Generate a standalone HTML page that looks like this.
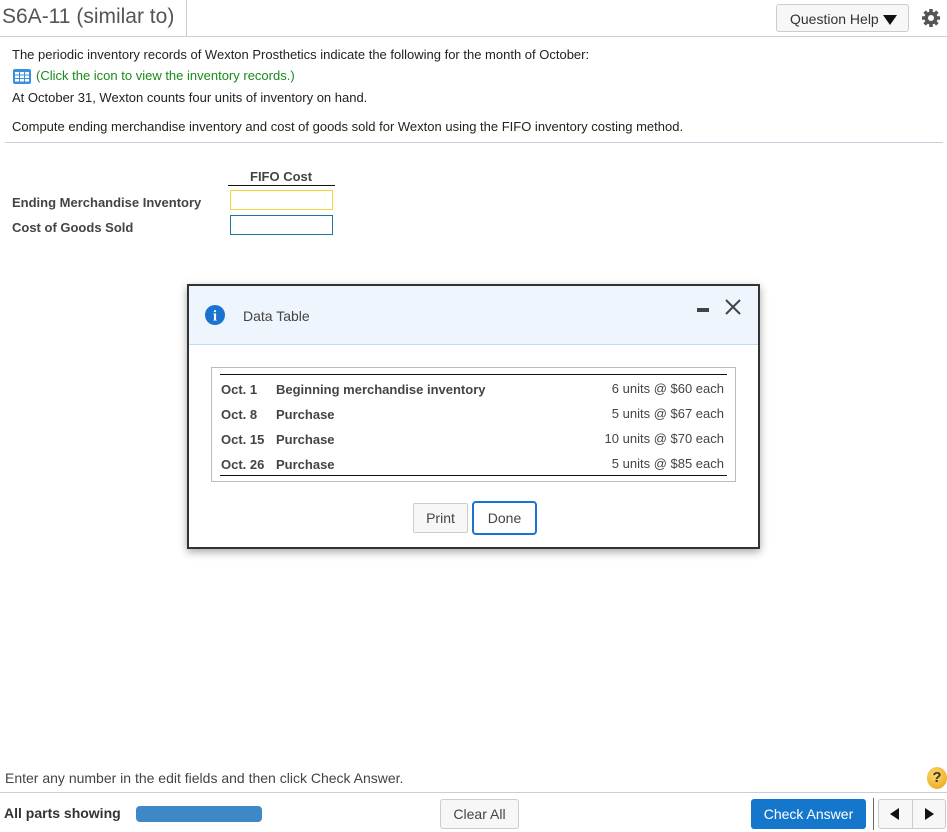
<!DOCTYPE html>
<html><head><style>
*{margin:0;padding:0;box-sizing:border-box}
body{width:947px;height:832px;position:relative;background:#fff;font-family:"Liberation Sans",Arial,sans-serif;color:#222;overflow:hidden}
.a{position:absolute;white-space:nowrap}
.t{font-size:13px}
.b{font-weight:bold;color:#444;font-size:13px}
</style></head><body>
<div class="a" style="left:2px;top:5px;font-size:21px;color:#555">S6A-11 (similar to)</div>
<div class="a" style="left:186px;top:0;width:1px;height:36px;background:#ccc"></div>
<div class="a" style="left:0;top:36px;width:947px;height:1px;background:#ccd"></div>
<div class="a" style="left:776px;top:4px;width:133px;height:28px;border:1px solid #ccc;border-radius:3px;background:#f7f7f7;font-size:14px;color:#333;padding:6px 0 0 13px">Question Help <span style="display:inline-block;width:0;height:0;border-left:7px solid transparent;border-right:7px solid transparent;border-top:10px solid #111;vertical-align:-1px"></span></div>
<svg class="a" style="left:921px;top:8px" width="20" height="20" viewBox="0 0 20 20"><g fill="#555"><circle cx="10" cy="10" r="6.5"/><g stroke="#555" stroke-width="3.5"><line x1="10" y1="1" x2="10" y2="19"/><line x1="1" y1="10" x2="19" y2="10"/><line x1="3.6" y1="3.6" x2="16.4" y2="16.4"/><line x1="16.4" y1="3.6" x2="3.6" y2="16.4"/></g></g><circle cx="10" cy="10" r="3" fill="#fff"/></svg>
<div class="a t" style="left:12px;top:47px">The periodic inventory records of Wexton Prosthetics indicate the following for the month of October:</div>
<svg class="a" style="left:13px;top:69px" width="18" height="15"><rect width="18" height="15" rx="2" fill="#3b8fe0"/><g fill="#fff"><rect x="2" y="3" width="4" height="2.5"/><rect x="7" y="3" width="4" height="2.5"/><rect x="12" y="3" width="4" height="2.5"/><rect x="2" y="6.5" width="4" height="2.5"/><rect x="7" y="6.5" width="4" height="2.5"/><rect x="12" y="6.5" width="4" height="2.5"/><rect x="2" y="10" width="4" height="2.5"/><rect x="7" y="10" width="4" height="2.5"/><rect x="12" y="10" width="4" height="2.5"/></g></svg>
<div class="a t" style="left:36px;top:68px;color:#1a8a1a">(Click the icon to view the inventory records.)</div>
<div class="a t" style="left:12px;top:90px">At October 31, Wexton counts four units of inventory on hand.</div>
<div class="a t" style="left:12px;top:119px">Compute ending merchandise inventory and cost of goods sold for Wexton using the FIFO inventory costing method.</div>
<div class="a" style="left:5px;top:142px;width:938px;height:1px;background:#ccd"></div>
<div class="a b" style="left:250px;top:169px">FIFO Cost</div>
<div class="a" style="left:228px;top:185px;width:107px;height:1px;background:#111"></div>
<div class="a b" style="left:12px;top:195px">Ending Merchandise Inventory</div>
<div class="a b" style="left:12px;top:220px">Cost of Goods Sold</div>
<div class="a" style="left:230px;top:190px;width:103px;height:20px;border:1px solid #f5d33a"></div>
<div class="a" style="left:230px;top:215px;width:103px;height:20px;border:1px solid #1b7a9a"></div>

<div class="a" style="left:187px;top:284px;width:573px;height:265px;border:2px solid #333;background:#fff;box-shadow:0 3px 8px rgba(0,0,0,.35)">
 <div class="a" style="left:0;top:0;width:569px;height:59px;background:#eef5fd;border-bottom:1px solid #bcdcf2"></div>
 <svg class="a" style="left:16px;top:19px" width="20" height="20"><circle cx="10" cy="10" r="10" fill="#1a73d0"/><text x="10" y="15.5" fill="#fff" font-family="Liberation Serif" font-weight="bold" font-size="15" text-anchor="middle">i</text></svg>
 <div class="a" style="left:54px;top:22px;font-size:14px;color:#444">Data Table</div>
 <div class="a" style="left:508px;top:22px;width:12px;height:4px;background:#444"></div>
 <svg class="a" style="left:535px;top:12px" width="18" height="18"><path d="M2 2L16 16M16 2L2 16" stroke="#444" stroke-width="2"/></svg>
 <div class="a" style="left:22px;top:81px;width:525px;height:115px;border:1px solid #bbb"></div>
 <div class="a" style="left:31px;top:88px;width:507px;height:1px;background:#111"></div>
 <div class="a" style="left:31px;top:189px;width:507px;height:1px;background:#111"></div>
 <div class="a b" style="left:32px;top:96px">Oct. 1</div>
 <div class="a b" style="left:32px;top:121px">Oct. 8</div>
 <div class="a b" style="left:32px;top:146px">Oct. 15</div>
 <div class="a b" style="left:32px;top:171px">Oct. 26</div>
 <div class="a b" style="left:87px;top:96px">Beginning merchandise inventory</div>
 <div class="a b" style="left:87px;top:121px">Purchase</div>
 <div class="a b" style="left:87px;top:146px">Purchase</div>
 <div class="a b" style="left:87px;top:171px">Purchase</div>
 <div class="a t" style="right:34px;top:95px;color:#444">6 units @ $60 each</div>
 <div class="a t" style="right:34px;top:120px;color:#444">5 units @ $67 each</div>
 <div class="a t" style="right:34px;top:145px;color:#444">10 units @ $70 each</div>
 <div class="a t" style="right:34px;top:170px;color:#444">5 units @ $85 each</div>
 <div class="a" style="left:224px;top:217px;width:55px;height:30px;border:1px solid #ccc;border-radius:2px;background:#f7f7f7;font-size:14px;color:#444;text-align:center;line-height:28px">Print</div>
 <div class="a" style="left:283px;top:215px;width:65px;height:34px;border:2px solid #1a73d0;border-radius:4px;font-size:14px;color:#444;text-align:center;line-height:30px">Done</div>
</div>

<div class="a" style="left:5px;top:770px;font-size:14px;color:#444">Enter any number in the edit fields and then click Check Answer.</div>
<div class="a" style="left:927px;top:767px;width:20px;height:22px;border-radius:50%;background:radial-gradient(circle at 40% 35%,#ffd86a,#e5a210);font-weight:bold;font-size:15px;color:#333;text-align:center;line-height:22px">?</div>
<div class="a" style="left:0;top:792px;width:947px;height:1px;background:#ccd"></div>
<div class="a" style="left:4px;top:805px;font-size:14px;font-weight:bold;color:#333">All parts showing</div>
<div class="a" style="left:136px;top:806px;width:126px;height:16px;border-radius:4px;background:#3f88c8"></div>
<div class="a" style="left:440px;top:799px;width:79px;height:30px;border:1px solid #ccc;border-radius:3px;background:#f7f7f7;font-size:14px;color:#444;text-align:center;line-height:28px">Clear All</div>
<div class="a" style="left:751px;top:799px;width:115px;height:30px;border-radius:3px;background:#1577cc;font-size:14px;color:#fff;text-align:center;line-height:30px">Check Answer</div>
<div class="a" style="left:873px;top:798px;width:1px;height:32px;background:#666"></div>
<div class="a" style="left:878px;top:799px;width:68px;height:30px;border:1px solid #ccc;border-radius:3px;background:#f7f7f7"></div>
<div class="a" style="left:912px;top:799px;width:1px;height:30px;background:#ccc"></div>
<div class="a" style="left:890px;top:808px;width:0;height:0;border-top:6px solid transparent;border-bottom:6px solid transparent;border-right:9px solid #111"></div>
<div class="a" style="left:925px;top:808px;width:0;height:0;border-top:6px solid transparent;border-bottom:6px solid transparent;border-left:9px solid #111"></div>
</body></html>
